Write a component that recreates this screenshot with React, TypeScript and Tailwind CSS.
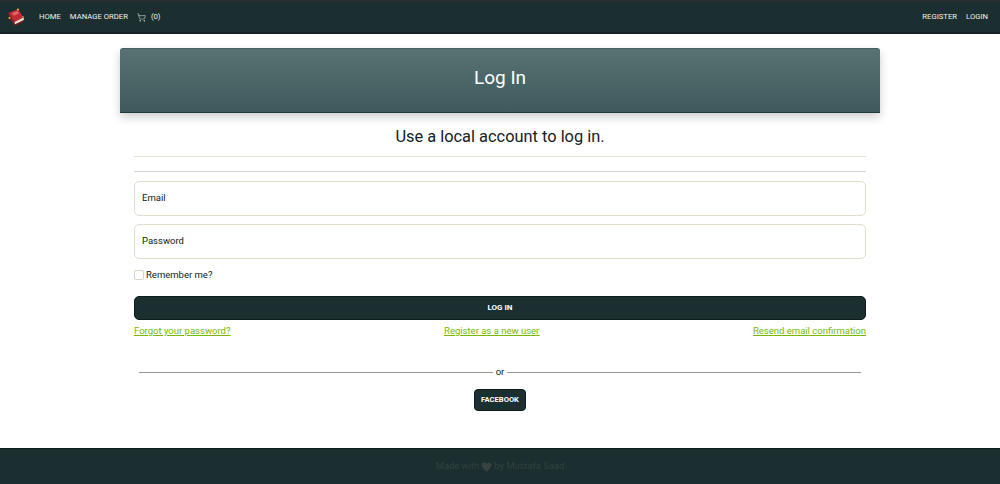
import { ShoppingCart } from "lucide-react";

function Book() {
  return (
    <svg width="18" height="19" viewBox="0 0 18 19" aria-hidden="true">
      <path d="M1.5 5 L11 1 L16.5 9.5 L7.5 14 Z" fill="#c22b33" />
      <path d="M1.5 5 L7.5 14 L8 18 L2 9.5 Z" fill="#8f1b22" />
      <path d="M7.5 14 L16.5 9.5 L17 12 L8 16.5 Z" fill="#e8dfc8" />
      <path d="M8 16.5 L17 12 L17 13.5 L8.5 18 Z" fill="#7c1a20" />
      <path d="M5 5 L10.5 3 L12 5.5 L6.8 7.8 Z" fill="#e2636a" />
      <circle cx="11" cy="1.6" r="1" fill="#e5c14a" />
      <circle cx="2.5" cy="10" r="1" fill="#e5c14a" />
      <circle cx="16" cy="9" r="0.8" fill="#e5c14a" />
    </svg>
  );
}

function Field({ label }: { label: string }) {
  return (
    <div className="h-[35px] flex items-center rounded-[5px] border border-[#e2dccb] bg-white px-[7px] pb-[1px] text-[9.5px] text-[#0e1a1c]">
      {label}
    </div>
  );
}

export default function App() {
  return (
    <div className="min-h-[484px] flex flex-col bg-white font-['Roboto',sans-serif] text-[#12211f]">
      <nav className="h-[34px] flex items-center justify-between bg-[#1b2e30] border-t-2 border-t-[#2a2f30] border-b-2 border-b-[#142325] pl-[7px] pr-[12px] text-[7.7px] text-[#f0f2f0]">
        <div className="flex items-center">
          <Book />
          <span className="ml-[14px]">HOME</span>
          <span className="ml-[9px]">MANAGE ORDER</span>
          <ShoppingCart className="ml-[9px] text-[#dfe4e4]" size={9} strokeWidth={1.5} />
          <span className="ml-[5px]">(0)</span>
        </div>
        <div className="flex items-center gap-[9px]">
          <span>REGISTER</span>
          <span>LOGIN</span>
        </div>
      </nav>

      <main className="flex-1 w-[760px] mx-auto pt-[14px]">
        <header className="h-[65px] flex items-center justify-center pb-[4px] rounded-t-[3px] bg-gradient-to-b from-[#587271] to-[#3e5a5c] border-t border-t-[#446062] border-b border-b-[#1f3a3e] shadow-[0_4px_10px_rgba(0,0,0,0.2)] text-[19px] text-white">
          Log In
        </header>

        <div className="px-[14px]">
          <h2 className="mt-[13px] text-center text-[16.4px] leading-[22px]">Use a local account to log in.</h2>
          <div className="mt-[8px] border-t border-[#e5e0d6]" />
          <div className="mt-[14px] border-t border-[#d9d6cf]" />

          <div className="mt-[9px] flex flex-col gap-[8px]">
            <Field label="Email" />
            <Field label="Password" />
          </div>

          <label className="mt-[9px] flex items-center gap-[2px] text-[9.5px] leading-[14px] text-[#0e1a1c]">
            <span className="w-[10px] h-[10px] rounded-[2px] border border-[#d9d4c6] bg-white" />
            Remember me?
          </label>

          <button className="mt-[14px] w-full h-[24px] rounded-[5px] bg-[#1b2e30] border border-[#0f1c1e] text-[8px] font-bold text-white">
            LOG IN
          </button>

          <div className="mt-[4px] flex justify-between text-[9.5px] leading-[14px] text-[#76b900] underline">
            <a>Forgot your password?</a>
            <a>Register as a new user</a>
            <a>Resend email confirmation</a>
          </div>

          <div className="mt-[27px] px-[5px] flex items-center gap-[3px] text-[9.5px] leading-[14px] text-[#0e1a1c]">
            <span className="flex-1 border-t border-[#969696]" />
            <span>or</span>
            <span className="flex-1 border-t border-[#969696]" />
          </div>

          <div className="mt-[10px] flex justify-center">
            <button className="h-[22px] px-[6px] rounded-[4px] bg-[#1b2e30] border border-[#0f1c1e] text-[7.6px] font-bold text-white">
              FACEBOOK
            </button>
          </div>
        </div>
      </main>

      <footer className="h-[36px] flex items-center justify-center gap-[2px] bg-[#1b2e30] border-t border-t-[#0d1a1c] text-[9.4px] text-[#31423f]">
        <span>Made with</span>
        <svg width="11" height="10" viewBox="0 0 24 22" aria-hidden="true">
          <path d="M12 21 C5 15 1 11 1 6.5 C1 3 3.7 1 6.5 1 C8.7 1 10.8 2.2 12 4.2 C13.2 2.2 15.3 1 17.5 1 C20.3 1 23 3 23 6.5 C23 11 19 15 12 21 Z" fill="#37433f" />
        </svg>
        <span>by Mustafa Saad</span>
      </footer>
    </div>
  );
}
